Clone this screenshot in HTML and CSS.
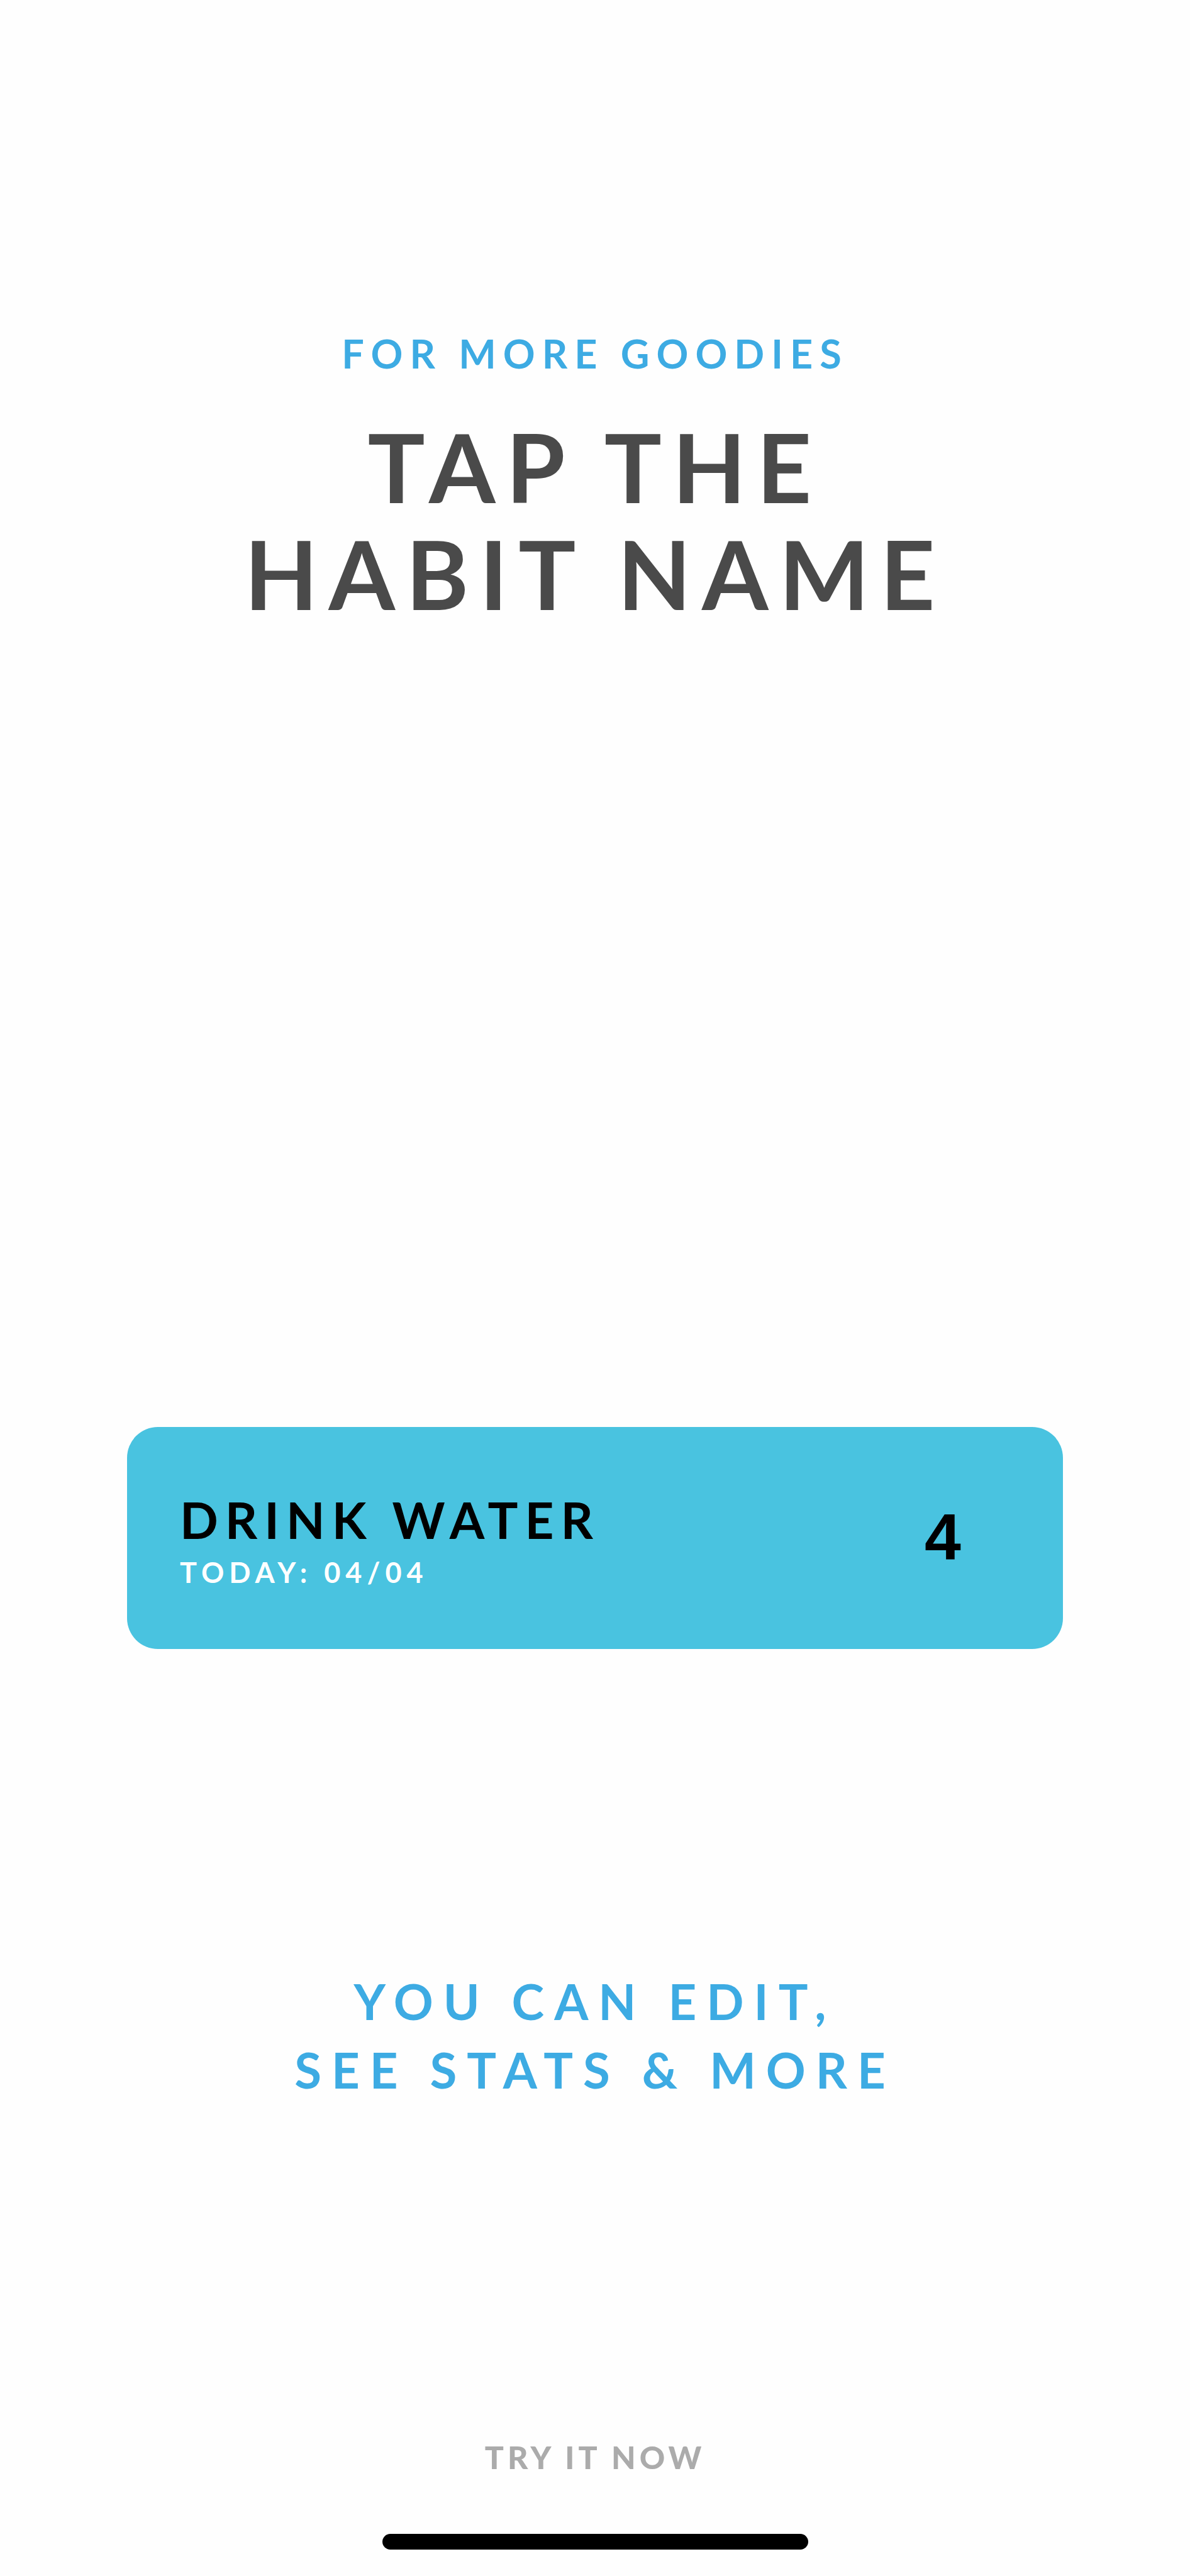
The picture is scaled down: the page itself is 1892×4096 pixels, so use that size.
FILE: index.html
```html
<!DOCTYPE html>
<html lang="en">
<head>
    <meta charset="UTF-8">
    <meta name="viewport" content="width=device-width, initial-scale=1.0">
    <title>Habit Tutorial</title>
    <link rel="stylesheet" href="styles.css">
</head>
<body>
    <main class="tutorial">
        <header class="intro">
            <p class="intro-label">FOR MORE GOODIES</p>
            <h1 class="intro-title">TAP THE<br>HABIT NAME</h1>
        </header>

        <section class="habit-card">
            <button type="button" class="habit-info">
                <span class="habit-name">DRINK WATER</span>
                <span class="habit-today">TODAY: 04/04</span>
            </button>
            <button type="button" class="habit-count">4</button>
        </section>

        <p class="tip">YOU CAN EDIT,<br>SEE STATS &amp; MORE</p>

        <footer class="bottom">
            <button type="button" class="try-button">TRY IT NOW</button>
            <div class="home-indicator"></div>
        </footer>
    </main>
</body>
</html>
```
FILE: styles.css
```css
* { box-sizing: border-box; }
body { margin: 0; background-color: #fefefe; font-family: Lato, "Open Sans", sans-serif; font-weight: 700; }
button { margin: 0; padding: 0; border: none; background: none; font: inherit; color: inherit; cursor: pointer; }
p, h1 { margin: 0; }

.tutorial { display: flex; flex-direction: column; min-height: 100vh; padding: 522px 0 42px; text-align: center; }

/* Heading */
.intro-label { font-size: 63px; line-height: 80px; letter-spacing: 11px; color: #3dabe3; }
.intro-title { margin-top: 54px; font-size: 152px; font-weight: 700; line-height: 170px; letter-spacing: 17px; color: #4a4a4a; }

/* Habit card */
.habit-card { display: flex; align-items: center; justify-content: space-between; margin: 1273px 202px 0; padding: 99px 84px 95px; border-radius: 49px; background-color: #49c3e0; }
.habit-info { display: flex; flex-direction: column; gap: 9px; text-align: left; }
.habit-name { font-size: 80px; line-height: 96px; letter-spacing: 11px; color: #000; }
.habit-today { font-size: 45px; line-height: 54px; letter-spacing: 8px; color: #fff; }
.habit-count { width: 214px; padding-bottom: 8px; font-family: "Liberation Sans", Arial, sans-serif; font-size: 104px; line-height: 120px; color: #000; }

.tip { margin-top: 506px; font-size: 78px; line-height: 109px; letter-spacing: 16px; color: #3dabe3; }

/* Bottom */
.bottom { display: flex; flex-direction: column; align-items: center; gap: 92px; margin-top: auto; }
.try-button { font-size: 50px; font-weight: 900; line-height: 60px; letter-spacing: 6px; color: #ababab; }
.home-indicator { width: 677px; max-width: 80%; height: 25px; border-radius: 13px; background-color: #000; }
```
